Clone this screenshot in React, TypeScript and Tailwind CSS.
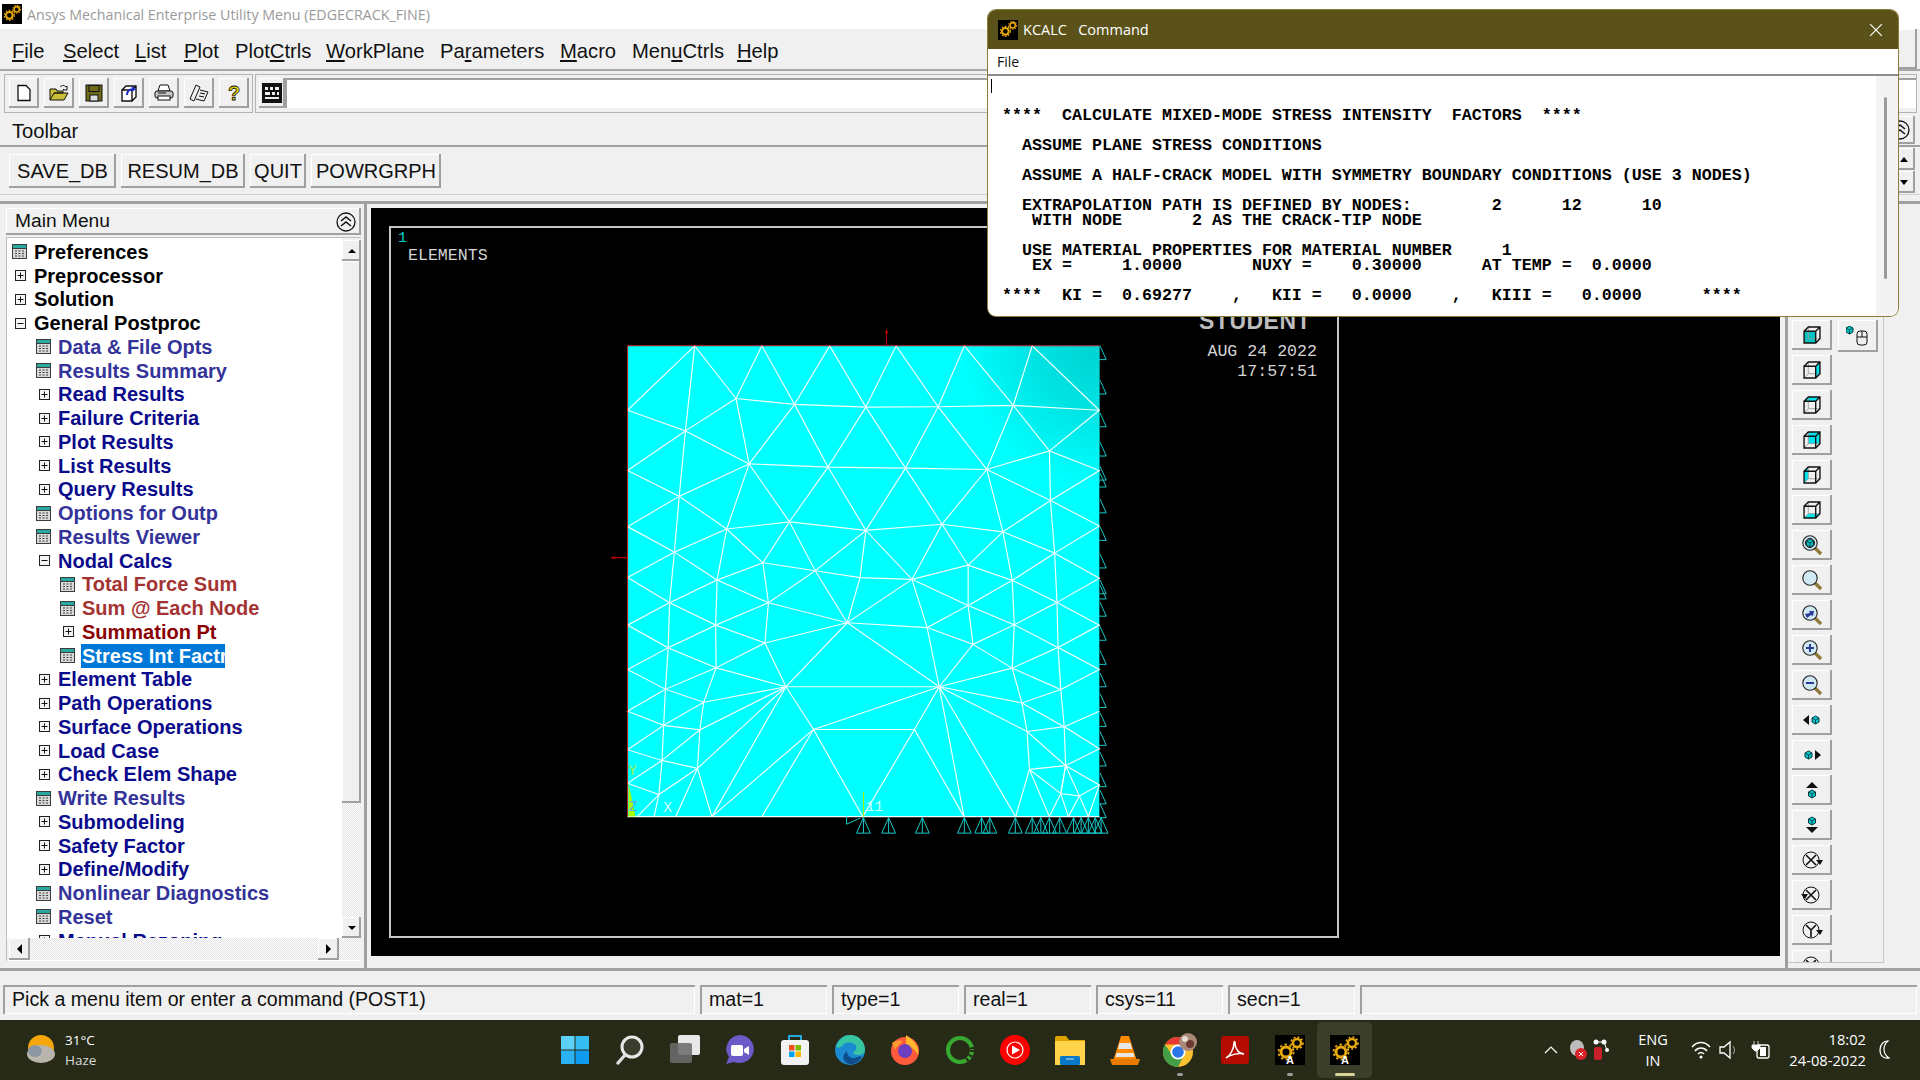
import React, {FC, ReactNode} from 'react';

const raised = 'shadow-[inset_-2px_-2px_0_#a0a0a0,inset_1px_1px_0_#ffffff]';
const sunken = 'shadow-[inset_2px_2px_0_#a0a0a0,inset_-1px_-1px_0_#ffffff]';
const dither = 'bg-[repeating-conic-gradient(#e2e2e2_0_25%,#ffffff_0_50%)] bg-[length:2px_2px]';

const menus = [
  {pre: '', ul: 'F', post: 'ile', w: 'w-[51px]'},
  {pre: '', ul: 'S', post: 'elect', w: 'w-[72px]'},
  {pre: '', ul: 'L', post: 'ist', w: 'w-[49px]'},
  {pre: '', ul: 'P', post: 'lot', w: 'w-[51px]'},
  {pre: 'Plot', ul: 'C', post: 'trls', w: 'w-[91px]'},
  {pre: '', ul: 'W', post: 'orkPlane', w: 'w-[114px]'},
  {pre: 'Pa', ul: 'r', post: 'ameters', w: 'w-[120px]'},
  {pre: '', ul: 'M', post: 'acro', w: 'w-[72px]'},
  {pre: 'Men', ul: 'u', post: 'Ctrls', w: 'w-[105px]'},
  {pre: '', ul: 'H', post: 'elp', w: 'w-[50px]'},
];

type Row = {label: string; level: 0 | 1 | 2; kind: 'calc' | 'plus' | 'minus'; tone: string; selected?: boolean};
const navy = 'text-[#0a0a8c]';
const blue = 'text-[#333399]';
const rows: Row[] = [
  {label: 'Preferences', level: 0, kind: 'calc', tone: 'text-black'},
  {label: 'Preprocessor', level: 0, kind: 'plus', tone: 'text-black'},
  {label: 'Solution', level: 0, kind: 'plus', tone: 'text-black'},
  {label: 'General Postproc', level: 0, kind: 'minus', tone: 'text-black'},
  {label: 'Data & File Opts', level: 1, kind: 'calc', tone: blue},
  {label: 'Results Summary', level: 1, kind: 'calc', tone: blue},
  {label: 'Read Results', level: 1, kind: 'plus', tone: navy},
  {label: 'Failure Criteria', level: 1, kind: 'plus', tone: navy},
  {label: 'Plot Results', level: 1, kind: 'plus', tone: navy},
  {label: 'List Results', level: 1, kind: 'plus', tone: navy},
  {label: 'Query Results', level: 1, kind: 'plus', tone: navy},
  {label: 'Options for Outp', level: 1, kind: 'calc', tone: blue},
  {label: 'Results Viewer', level: 1, kind: 'calc', tone: blue},
  {label: 'Nodal Calcs', level: 1, kind: 'minus', tone: navy},
  {label: 'Total Force Sum', level: 2, kind: 'calc', tone: 'text-[#a33333]'},
  {label: 'Sum @ Each Node', level: 2, kind: 'calc', tone: 'text-[#a33333]'},
  {label: 'Summation Pt', level: 2, kind: 'plus', tone: 'text-[#8b0000]'},
  {label: 'Stress Int Factr', level: 2, kind: 'calc', tone: 'text-white', selected: true},
  {label: 'Element Table', level: 1, kind: 'plus', tone: navy},
  {label: 'Path Operations', level: 1, kind: 'plus', tone: navy},
  {label: 'Surface Operations', level: 1, kind: 'plus', tone: navy},
  {label: 'Load Case', level: 1, kind: 'plus', tone: navy},
  {label: 'Check Elem Shape', level: 1, kind: 'plus', tone: navy},
  {label: 'Write Results', level: 1, kind: 'calc', tone: blue},
  {label: 'Submodeling', level: 1, kind: 'plus', tone: navy},
  {label: 'Safety Factor', level: 1, kind: 'plus', tone: navy},
  {label: 'Define/Modify', level: 1, kind: 'plus', tone: navy},
  {label: 'Nonlinear Diagnostics', level: 1, kind: 'calc', tone: blue},
  {label: 'Reset', level: 1, kind: 'calc', tone: blue},
  {label: 'Manual Rezoning', level: 1, kind: 'plus', tone: navy},
];
const levelPad = ['pl-[5px]', 'pl-[29px]', 'pl-[53px]'];

const meshLines = [
  '80,262 275,75 395,228 470,75 565,245 667,75 772,253 860,75 982,252 1058,75 1200,248 1255,75 1450,262',
  '395,228 565,245 772,253 982,252 1200,248 1450,262',
  '275,75 248,322 230,512 216,674 202,821 198,952 190,1072 185,1177 180,1279 171,1378 157,1442',
  '80,262 248,322 395,228 433,418 248,322 80,437 230,512 433,418',
  '433,418 565,245 662,427 772,253 887,430 982,252 1123,434 1200,248 1305,380 1450,262',
  '433,418 662,427 887,430 1123,434 1305,380 1450,437 1308,524 1450,598',
  '80,600 230,512 368,607 433,418 550,586 662,427 772,611 887,430 993,593 1123,434 1170,615 1308,524 1123,434',
  '1305,380 1308,524 1320,677 1327,820 1330,951 1338,1073 1348,1181 1352,1294 1338,1375 1305,1442',
  '368,607 550,586 772,611 993,593 1170,615 1320,677 1450,598',
  '80,600 216,674 368,607 340,755 336,886 337,1010 301,1110 290,1190 283,1302 325,1442',
  '80,748 216,674 340,755 473,705 368,607',
  '473,705 550,586 625,728 772,611 906,753 993,593 1069,712 1170,615 1197,756 1203,885 1197,1011 1225,1112 1240,1195 1247,1305 1207,1442',
  '473,705 625,728 755,748 906,753 1069,712 1197,756 1320,677 1450,750 1327,820 1197,756',
  '772,611 755,748 718,879 625,728 489,821 473,705',
  '80,748 202,821 340,755 489,821 718,879 906,753 950,893 985,1065',
  '80,886 202,821 336,886 489,821 479,938 336,886 198,952 80,886',
  '718,879 950,893 1069,829 1069,712',
  '1069,829 1083,942 950,893',
  '1069,829 1203,885 1327,820 1450,886 1330,951 1203,885 1083,942 1197,1011 1330,951 1450,1015 1338,1073 1197,1011',
  '906,753 1069,829 1197,756',
  '479,938 718,879 540,1065 479,938 337,1010 540,1065',
  '718,879 985,1065 1083,942',
  '540,1065 985,1065 1197,1011',
  '80,1015 198,952 337,1010 190,1072 80,1015',
  '190,1072 301,1110 540,1065 290,1190 185,1177 80,1136 190,1072',
  '185,1177 301,1110',
  '80,1248 185,1177',
  '80,1248 180,1279 290,1190',
  '80,1345 180,1279 283,1302 540,1065 325,1442 620,1189 540,1065',
  '620,1189 913,1189 985,1065 620,1189',
  '470,1442 620,1189 763,1442 913,1189 1057,1442 985,1065 1207,1442',
  '985,1065 1240,1195',
  '985,1065 1225,1112 1338,1073',
  '1225,1112 1348,1181 1450,1136',
  '1240,1195 1348,1181 1450,1245 1352,1294 1240,1195',
  '1247,1305 1352,1294 1450,1350 1392,1382 1352,1294 1338,1375 1392,1382 1360,1442',
  '1247,1305 1338,1375 1360,1442',
  '1247,1305 1305,1442',
  '1392,1382 1418,1442 1450,1350',
  '80,1345 171,1378 283,1302 220,1442',
  '171,1378 108,1442',
  '80,1442 1450,1442',
];
const rightBc = [75, 175, 270, 355, 425, 445, 520, 600, 680, 755, 770, 820, 890, 960, 1025, 1085, 1140, 1195, 1255, 1315, 1365, 1405];
const bottomBc = [765, 838, 936, 1058, 1108, 1132, 1206, 1255, 1280, 1305, 1335, 1375, 1397, 1418, 1438, 1455];

const dialogText = [
  '',
  '',
  '****  CALCULATE MIXED-MODE STRESS INTENSITY  FACTORS  ****',
  '',
  '  ASSUME PLANE STRESS CONDITIONS',
  '',
  '  ASSUME A HALF-CRACK MODEL WITH SYMMETRY BOUNDARY CONDITIONS (USE 3 NODES)',
  '',
  '  EXTRAPOLATION PATH IS DEFINED BY NODES:        2      12      10',
  '   WITH NODE       2 AS THE CRACK-TIP NODE',
  '',
  '  USE MATERIAL PROPERTIES FOR MATERIAL NUMBER     1',
  '   EX =     1.0000       NUXY =    0.30000      AT TEMP =  0.0000',
  '',
  '****  KI =  0.69277    ,   KII =   0.0000    ,   KIII =   0.0000      ****',
].join('\n');

const Gears: FC<{letter?: boolean; className?: string}> = ({letter, className}) => (
  <svg viewBox="0 0 30 30" className={className}>
    <rect width="30" height="30" fill="#000"/>
    <circle cx="22" cy="8" r="4" fill="none" stroke="#e8a90c" strokeWidth="2.4"/>
    <circle cx="22" cy="8" r="6" fill="none" stroke="#e8a90c" strokeWidth="1.6" strokeDasharray="2 2"/>
    <circle cx="11" cy="17" r="5" fill="none" stroke="#e8a90c" strokeWidth="3"/>
    <circle cx="11" cy="17" r="7.5" fill="none" stroke="#e8a90c" strokeWidth="1.8" strokeDasharray="2.4 2.4"/>
    {letter && <text x="15" y="29" textAnchor="middle" fontSize="11" fontWeight="700" fontFamily="Liberation Sans" fill="#fff">A</text>}
  </svg>
);

const CalcIcon: FC = () => (
  <svg viewBox="0 0 15 15" className="w-[15px] h-[15px]">
    <rect width="15" height="15" fill="#3c3c3c"/>
    <rect x="1" y="1" width="13" height="3" fill="#2aa7a0"/>
    <rect x="1" y="5" width="13" height="9" fill="#d8d8d8"/>
    <path d="M3 7h2M6.5 7h2M10 7h2M3 9.5h2M6.5 9.5h2M10 9.5h2M3 12h2M6.5 12h2M10 12h2" stroke="#444" strokeWidth="1"/>
  </svg>
);

const BoxIcon: FC<{open?: boolean}> = ({open}) => (
  <svg viewBox="0 0 11 11" className="w-[11px] h-[11px] ml-[1px]">
    <rect x="0.5" y="0.5" width="10" height="10" fill="#f4f4f4" stroke="#222"/>
    <path d={open ? 'M2.5 5.5h6' : 'M2.5 5.5h6M5.5 2.5v6'} stroke="#111"/>
  </svg>
);

const TreeRow: FC<{row: Row}> = ({row}) => (
  <div className={`h-[23.75px] flex items-center whitespace-nowrap ${levelPad[row.level]}`}>
    <span className="w-[15px] flex justify-center shrink-0">
      {row.kind === 'calc' ? <CalcIcon/> : <BoxIcon open={row.kind === 'minus'}/>}
    </span>
    <span className={`ml-[6px] pl-[1px] h-[24px] leading-[24px] text-[20px] font-bold ${row.tone} ${row.selected ? 'bg-[#0078d7] w-[144px] overflow-hidden' : ''}`}>
      {row.label}
    </span>
  </div>
);

const ToolButton: FC<{children: ReactNode; className?: string}> = ({children, className}) => (
  <div className={`w-[30px] h-[30px] flex items-center justify-center bg-[#f0f0f0] ${raised} ${className ?? ''}`}>
    {children}
  </div>
);

const topIcons: ReactNode[] = [
  <svg key="new" viewBox="0 0 20 20" className="w-[20px] h-[20px]"><path d="M4 2.5h8l4 4v11H4z" fill="#fff" stroke="#111" strokeWidth="1.3"/></svg>,
  <svg key="open" viewBox="0 0 20 20" className="w-[20px] h-[20px]"><path d="M1 17V6h6l1 2h6v2H5L1 17h14l4-7H5" fill="#c9bd3a" stroke="#111"/><path d="M11 4c2-2 4-2 6 0l1-1v4h-4l1-1" fill="none" stroke="#111"/></svg>,
  <svg key="save" viewBox="0 0 20 20" className="w-[20px] h-[20px]"><rect x="2" y="2" width="16" height="16" fill="#6e6a1a" stroke="#111"/><rect x="5" y="2.5" width="10" height="6" fill="#6e6a1a" stroke="#111"/><rect x="6" y="12" width="8" height="6" fill="#ddd" stroke="#111"/></svg>,
  <svg key="resume" viewBox="0 0 20 20" className="w-[20px] h-[20px]"><path d="M3 7h10v11H3zM3 7l4-4h10v11l-4 4M13 7l4-4" fill="#fff" stroke="#111" strokeWidth="1.4"/><path d="M8 12c0-5 4-6 7-6l-2-2M15 6l-2 2" fill="none" stroke="#1d2fc4" strokeWidth="2"/></svg>,
  <svg key="print" viewBox="0 0 20 20" className="w-[20px] h-[20px]"><path d="M6 2h8l2 6H4z" fill="#fff" stroke="#111"/><rect x="1" y="8" width="18" height="7" rx="2" fill="#c8c8c8" stroke="#111"/><rect x="4" y="13" width="12" height="4" fill="#fff" stroke="#111"/><path d="M4 10h8" stroke="#111"/></svg>,
  <svg key="note" viewBox="0 0 20 20" className="w-[20px] h-[20px]"><path d="M7 2l4 2-6 14-4-2zM11 7l8 2-4 9-8-2" fill="#eee" stroke="#111"/><path d="M11 10l5 1M10 13l5 1" stroke="#111"/></svg>,
  <svg key="help" viewBox="0 0 20 20" className="w-[20px] h-[20px]"><text x="10" y="17" textAnchor="middle" fontSize="20" fontWeight="700" fontFamily="Liberation Sans" fill="#e8d800" stroke="#111" strokeWidth="0.8">?</text></svg>,
];

// cube with one shaded face; face names follow the picture's button order
const facePaths: Record<string, string> = {
  front: 'M1 5h11v11H1z',
  right: 'M12 5l4-4v11l-4 4z',
  top: 'M1 5l4-4h11l-4 4z',
  back: 'M5 1h11v11H5z',
  left: 'M1 5l4-4v11l-4 4z',
  bottom: 'M1 16l4-4h11l-4 4z',
};
const Cube: FC<{face: string}> = ({face}) => (
  <svg viewBox="0 0 17 17" className="w-[18px] h-[18px]">
    <path d={facePaths[face]} fill={face === 'front' ? '#00c4c4' : '#00e5ee'}/>
    <path d="M5 1v11H16M5 12l-4 4" fill="none" stroke="#999" strokeWidth="0.8"/>
    <path d="M1 5h11v11H1zM1 5l4-4h11v11l-4 4M12 5l4-4" fill="none" stroke="#111" strokeWidth="1.3"/>
  </svg>
);

const MiniCube: FC<{x: number; y: number}> = ({x, y}) => (
  <g transform={`translate(${x} ${y})`}>
    <path d="M3.5 0l3.500 2v4l-3.500 2L0 6V2z" fill="#00c8d0" stroke="#0b3a3a" strokeWidth="1"/>
    <path d="M3.5 4v4M0 2l3.500 2L7 2" stroke="#0b3a3a" strokeWidth="0.9" fill="none"/>
  </g>
);

const Magnifier: FC<{variant: 'cube' | 'plain' | 'back' | 'plus' | 'minus'}> = ({variant}) => (
  <svg viewBox="0 0 22 22" className="w-[22px] h-[22px]">
    <path d="M13 13l7 7" stroke="#8f7a3c" strokeWidth="3.4"/>
    <circle cx="9" cy="9" r="7.2" fill="#cfe8f2" stroke="#222" strokeWidth="1.1"/>
    {variant === 'cube' && <><circle cx="9" cy="9" r="4.6" fill="#a8d8e4" stroke="#222"/><MiniCube x={5.5} y={5}/></>}
    {variant === 'plus' && <path d="M5 9h8M9 5v8" stroke="#2c3a9a" strokeWidth="2"/>}
    {variant === 'minus' && <path d="M5 9h8" stroke="#2c3a9a" strokeWidth="2"/>}
    {variant === 'back' && <path d="M4 10l5-1-1-2 5 0-1 5-2-1-4 3z" fill="#2c3a9a"/>}
  </svg>
);

const Pan: FC<{dir: 'l' | 'r' | 'u' | 'd'}> = ({dir}) => (
  <svg viewBox="0 0 22 22" className="w-[22px] h-[22px]">
    {dir === 'l' && <><path d="M8 6v10l-6-5z" fill="#111"/><MiniCube x={11} y={7}/></>}
    {dir === 'r' && <><MiniCube x={4} y={7}/><path d="M14 6v10l6-5z" fill="#111"/></>}
    {dir === 'u' && <><path d="M5 9h12l-6-6z" fill="#111"/><MiniCube x={7.5} y={11}/></>}
    {dir === 'd' && <><MiniCube x={7.5} y={3}/><path d="M5 13h12l-6 6z" fill="#111"/></>}
  </svg>
);

const Rotate: FC<{glyph: 'x' | 'xr' | 'y'}> = ({glyph}) => (
  <svg viewBox="0 0 22 22" className="w-[22px] h-[22px]">
    <circle cx="10" cy="11" r="8" fill="none" stroke="#111" strokeWidth="1"/>
    {glyph === 'y' ? <path d="M10 18v-7L5 6M10 11l5-5" stroke="#111" strokeWidth="1.6" fill="none"/> : <path d="M5 6l10 10M15 6L5 16" stroke="#111" strokeWidth="1.6"/>}
    {glyph === 'xr' ? <path d="M0 10h7l-3 5z" fill="#111"/> : <path d="M15 11h7l-3 5z" fill="#111"/>}
  </svg>
);

const sideIcons: ReactNode[] = [
  <Cube key="c1" face="front"/>, <Cube key="c2" face="right"/>, <Cube key="c3" face="top"/>,
  <Cube key="c4" face="back"/>, <Cube key="c5" face="left"/>, <Cube key="c6" face="bottom"/>,
  <Magnifier key="m1" variant="cube"/>, <Magnifier key="m2" variant="plain"/>, <Magnifier key="m3" variant="back"/>,
  <Magnifier key="m4" variant="plus"/>, <Magnifier key="m5" variant="minus"/>,
  <Pan key="p1" dir="l"/>, <Pan key="p2" dir="r"/>, <Pan key="p3" dir="u"/>, <Pan key="p4" dir="d"/>,
  <Rotate key="r1" glyph="x"/>, <Rotate key="r2" glyph="xr"/>, <Rotate key="r3" glyph="y"/>, <Rotate key="r4" glyph="y"/>,
];

const Mesh: FC = () => (
  <svg viewBox="0 0 1568 1568" className="w-[540px] h-[540px]">
    <defs>
      <radialGradient id="corner" gradientUnits="userSpaceOnUse" cx="1450" cy="75" r="400">
        <stop offset="0" stopColor="#00d2d2"/>
        <stop offset="0.5" stopColor="#00e4e4"/>
        <stop offset="1" stopColor="#00ffff"/>
      </radialGradient>
    </defs>
    <rect x="80" y="75" width="1370" height="1367" fill="#00ffff"/>
    <rect x="1050" y="75" width="400" height="400" fill="url(#corner)"/>
    <g fill="none" stroke="#f4ffff" strokeWidth="3.4">
      {meshLines.map(points => <polyline key={points} points={points}/>)}
    </g>
    <path d="M80 1442V75h1370" fill="none" stroke="#c02020" strokeWidth="3"/>
    <path d="M832 75V32M80 690H36" stroke="#c00000" strokeWidth="3"/>
    <path d="M827 38l5-12 5 12zM42 685l-12 5 12 5z" fill="#c00000"/>
    <g fill="none" stroke="#14d0d0" strokeWidth="2.8">
      {rightBc.map(y => <path key={y} d={`M1452 ${y}l18 40h-20`}/>)}
      {bottomBc.map(x => <path key={x} d={`M${x} 1445l-20 45h40zM${x} 1445v45`}/>)}
      <path d="M716 1442v22l40-18"/>
    </g>
    <path d="M83 1345l20 97H83z" fill="#a8ff00"/>
    <path d="M765 1370v72" stroke="#a8f000" strokeWidth="3"/>
    <g fontFamily="Liberation Mono" fontSize="42">
      <text x="82" y="1322" fill="#9cf04a">Y</text>
      <text x="84" y="1425" fill="#5aa8e0">Z</text>
      <text x="184" y="1428" fill="#d8ffff">X</text>
      <text x="772" y="1426" fill="#d8ffff">11</text>
    </g>
  </svg>
);

const Weather: FC = () => (
  <svg viewBox="0 0 30 32" className="w-[30px] h-[32px]">
    <circle cx="15" cy="14" r="13" fill="#f5a70a"/>
    <ellipse cx="15" cy="20" rx="14" ry="9" fill="#b9b4ac"/>
    <ellipse cx="9" cy="17" rx="7" ry="6" fill="#8d97a3"/>
  </svg>
);

const taskIcons: ReactNode[] = [
  <svg key="win" viewBox="0 0 30 30" className="w-[30px] h-[30px]">
    <path d="M1 1h13.5v13.5H1z" fill="#5cd0f5"/><path d="M15.5 1H29v13.5H15.5z" fill="#36bdf2"/>
    <path d="M1 15.5h13.5V29H1z" fill="#2cb2f2"/><path d="M15.5 15.5H29V29H15.5z" fill="#0f9bf0"/>
  </svg>,
  <svg key="search" viewBox="0 0 30 30" className="w-[30px] h-[30px]">
    <circle cx="17" cy="12" r="10" fill="#3a3d2e" stroke="#e8e8e8" strokeWidth="3"/>
    <path d="M10 20l-7 8" stroke="#e0e0e0" strokeWidth="3.4" strokeLinecap="round"/>
  </svg>,
  <svg key="task" viewBox="0 0 30 30" className="w-[30px] h-[30px]">
    <rect x="8" y="0" width="22" height="20" rx="2" fill="#e8e8e8"/>
    <rect x="0" y="8" width="22" height="20" rx="2" fill="#6c6c6c" fillOpacity="0.88"/>
  </svg>,
  <svg key="chat" viewBox="0 0 30 30" className="w-[30px] h-[30px]">
    <path d="M15 0a14.500 14 0 1 1-6 27l-8 2 3-7A14.500 14 0 0 1 15 0z" fill="#6a5bc8"/>
    <rect x="6" y="10" width="12" height="11" rx="2" fill="#fff"/><path d="M19 14l5-3v9l-5-3z" fill="#fff"/>
  </svg>,
  <svg key="store" viewBox="0 0 30 30" className="w-[30px] h-[30px]">
    <path d="M9 6V1h12v5" fill="none" stroke="#27a9e0" strokeWidth="2"/>
    <rect x="1" y="5" width="28" height="25" rx="3" fill="#f2f2f2"/>
    <path d="M9 10h5.500v5.500H9z" fill="#f25022"/><path d="M15.500 10H21v5.500h-5.500z" fill="#7fba00"/>
    <path d="M9 16.500h5.500V22H9z" fill="#00a4ef"/><path d="M15.500 16.500H21V22h-5.500z" fill="#ffb900"/>
  </svg>,
  <svg key="edge" viewBox="0 0 30 30" className="w-[30px] h-[30px]">
    <circle cx="15" cy="15" r="15" fill="#1b8ad0"/>
    <path d="M1 12C4 3 10 0 15 0c8 0 15 6 15 15 0 3-3 5-7 5-3 0-5-1-5-3 3-1 4-3 3-6-2-4-10-5-14 0-2 2-4 2-6 1z" fill="#36c5a0"/>
    <path d="M12 16c0 5 4 8 8 7 2-1 5-2 7-1-3 5-8 8-13 7-6-2-8-8-2-13z" fill="#0f4e8a"/>
  </svg>,
  <svg key="ff" viewBox="0 0 30 30" className="w-[30px] h-[30px]">
    <circle cx="15" cy="16" r="14" fill="#ff5a3c"/>
    <path d="M16 0c8 5 14 12 12 20-2-4-6-8-12-10z" fill="#ffb72b"/>
    <path d="M2 8c3-3 8-3 11-2-3 3-6 5-8 9z" fill="#ff9a2e"/>
    <circle cx="15" cy="16" r="7" fill="#6b3fc0"/>
  </svg>,
  <svg key="ring" viewBox="0 0 30 30" className="w-[30px] h-[30px]">
    <circle cx="15" cy="15" r="12" fill="none" stroke="#36a92e" strokeWidth="4"/>
    <circle cx="15" cy="15" r="12" fill="none" stroke="#272a17" strokeWidth="4.200" strokeDasharray="2 3 2 3 2 60"/>
  </svg>,
  <svg key="yt" viewBox="0 0 30 30" className="w-[30px] h-[30px]">
    <circle cx="15" cy="15" r="15" fill="#ff0000"/><circle cx="15" cy="15" r="8" fill="#ff0000" stroke="#fff" strokeWidth="1.200"/>
    <path d="M12 10.500l8 4.500-8 4.500z" fill="#fff"/>
  </svg>,
  <svg key="folder" viewBox="0 0 30 30" className="w-[30px] h-[30px]">
    <path d="M0 3a2 2 0 0 1 2-2h9l3 4h16v4H0z" fill="#e0a400"/>
    <path d="M0 6h30v24H0z" fill="#ffd24c"/>
    <rect x="5" y="21" width="20" height="9" rx="1.500" fill="#0a78c8"/><path d="M11 24h8" stroke="#cde" strokeWidth="1"/>
  </svg>,
  <svg key="vlc" viewBox="0 0 30 30" className="w-[30px] h-[30px]">
    <path d="M11 1h8l8 25H3z" fill="#ff8a00"/><path d="M9.500 8h11l1.500 6H8zM6.500 18h17l1 4H5.500z" fill="#e6e6e6"/>
    <path d="M0 24h30l-2 6H2z" fill="#e87a00"/>
  </svg>,
  <svg key="chrome" viewBox="0 0 34 34" className="w-[34px] h-[34px]">
    <circle cx="15" cy="19" r="15" fill="#fbc02d"/>
    <path d="M2 11.500A15 15 0 0 1 28 11.500H15z" fill="#e53935"/>
    <path d="M2 11.500A15 15 0 0 0 15 34l6-12H9z" fill="#43a047"/>
    <circle cx="15" cy="19" r="7.500" fill="#fff"/><circle cx="15" cy="19" r="5.800" fill="#2a75e8"/>
    <circle cx="25" cy="9" r="9" fill="#a98878"/><circle cx="27" cy="11" r="4" fill="#6a3a30"/><circle cx="22" cy="6" r="3" fill="#e6dcd4"/>
  </svg>,
  <svg key="pdf" viewBox="0 0 28 28" className="w-[28px] h-[28px]">
    <rect width="28" height="28" rx="3" fill="#b30b00"/>
    <path d="M5 22c4-2 8-9 8-15 0-2 1-2 1 0 0 6 4 11 9 11-5-1-13 0-18 4z" fill="none" stroke="#fff" strokeWidth="1.500"/>
  </svg>,
  <Gears key="a1" letter className="w-[30px] h-[30px]"/>,
  <Gears key="a2" letter className="w-[30px] h-[30px]"/>,
];

const dots = [false, false, false, false, false, false, false, false, false, false, false, true, false, true, true];

const StatusField: FC<{children?: ReactNode; className: string}> = ({children, className}) => (
  <div className={`h-[29px] pl-[9px] flex items-center text-[19.6px] text-[#111] ${sunken} ${className}`}>{children}</div>
);

const App: FC = () => (
  <div className="relative w-[1920px] h-[1080px] overflow-hidden bg-[#f0f0f0] flex flex-col font-[family-name:Liberation_Sans,sans-serif]">
    {/* window title */}
    <div className="h-[29px] bg-white flex items-center pl-[2px] shrink-0">
      <Gears className="w-[20px] h-[20px] mb-[1px]"/>
      <span className="ml-[5px] text-[14.25px] text-[#9a9a9a] font-[family-name:Open_Sans,sans-serif]">
        Ansys Mechanical Enterprise Utility Menu (EDGECRACK_FINE)
      </span>
    </div>

    {/* menu bar */}
    <div className="h-[42px] shrink-0 flex items-center pl-[12px] pr-[3px] border-b-2 border-[#a8a8a8]">
      <div className="flex pt-[5px]">
        {menus.map(m => (
          <span key={m.ul + m.post} className={`text-[20.2px] text-[#111] whitespace-nowrap ${m.w}`}>
            {m.pre}<span className="underline">{m.ul}</span>{m.post}
          </span>
        ))}
      </div>
      <div className={`ml-auto w-[40px] h-[40px] ${raised}`}/>
    </div>

    {/* command line row */}
    <div className="h-[44px] shrink-0 flex items-center pl-[4px] pr-[3px] gap-[2px]">
      <div className="h-[39px] w-[249px] flex items-center gap-[5px] pl-[4px] border border-[#b4b4b4]">
        {topIcons.map((icon, i) => <ToolButton key={i}>{icon}</ToolButton>)}
      </div>
      <div className="h-[39px] grow flex items-center pl-[3px] border border-[#b4b4b4]">
        <div className={`w-[26px] h-[30px] flex items-center justify-center ${raised}`}>
          <svg viewBox="0 0 20 20" className="w-[20px] h-[20px]">
            <rect width="20" height="20" fill="#111"/>
            <path d="M3 4h3v3H3zM8 4h3v3H8zM13 4h4v3h-4zM3 9h5v3H3zM10 9h3v3h-3zM15 9h2v3h-2zM3 14h14v2H3z" fill="#eee"/>
          </svg>
        </div>
        <div className={`grow h-[30px] bg-white ${sunken}`}/>
      </div>
    </div>

    {/* toolbar label */}
    <div className="h-[32px] shrink-0 flex items-center pl-[12px] pr-[5px] text-[20.2px] text-[#111] border-b-2 border-[#a0a0a0]">
      <span className="pt-[2px]">Toolbar</span>
      <div className={`ml-auto w-[30px] h-[28px] flex items-center justify-center ${raised}`}>
        <svg viewBox="0 0 20 20" className="w-[20px] h-[20px]">
          <circle cx="10" cy="10" r="9" fill="none" stroke="#111" strokeWidth="1.3"/>
          <path d="M5 9l5-4 5 4M5 14l5-4 5 4" fill="none" stroke="#111" strokeWidth="1.6"/>
        </svg>
      </div>
    </div>

    {/* toolbar buttons */}
    <div className="h-[48px] shrink-0 flex items-center pl-[9px] pr-[5px] gap-[5px] border-b border-[#cfcfcf]">
      {[
        ['SAVE_DB', 'w-[107px]'],
        ['RESUM_DB', 'w-[124px]'],
        ['QUIT', 'w-[56px]'],
        ['POWRGRPH', 'w-[130px]'],
      ].map(([label, w]) => (
        <div key={label} className={`h-[34px] flex items-center justify-center text-[20px] text-[#111] ${raised} ${w}`}>{label}</div>
      ))}
      <div className="ml-auto flex flex-col gap-[1px]">
        <div className={`w-[22px] h-[22px] flex items-center justify-center ${raised}`}><span className="border-x-[4px] border-x-transparent border-b-[5px] border-b-black"/></div>
        <div className={`w-[22px] h-[22px] flex items-center justify-center ${raised}`}><span className="border-x-[4px] border-x-transparent border-t-[5px] border-t-black"/></div>
      </div>
    </div>

    {/* main area */}
    <div className="h-[770px] shrink-0 mt-[6px] flex border-t-[3px] border-b-[3px] border-[#a0a0a0]">
      {/* main menu panel */}
      <div className="w-[371px] shrink-0 flex">
        <div className="w-[361px] pl-[6px] pt-[4px] flex flex-col">
          <div className={`h-[27px] flex items-center pl-[9px] pr-[5px] text-[19.2px] text-[#111] ${raised}`}>
            <span>Main Menu</span>
            <svg viewBox="0 0 20 20" className="ml-auto w-[20px] h-[20px]">
              <circle cx="10" cy="10" r="9" fill="none" stroke="#111" strokeWidth="1.3"/>
              <path d="M5 9l5-4 5 4M5 14l5-4 5 4" fill="none" stroke="#111" strokeWidth="1.6"/>
            </svg>
          </div>
          <div className="mt-[2px] h-[724px] bg-white flex flex-col border-t border-l border-[#bdbdbd]">
            <div className="flex h-[700px]">
              <div className="grow pt-[2px] overflow-hidden">
                {rows.map(r => <TreeRow key={r.label} row={r}/>)}
              </div>
              <div className={`w-[19px] shrink-0 flex flex-col ${dither}`}>
                <div className={`h-[21px] shrink-0 mt-[2px] bg-[#f0f0f0] flex items-center justify-center ${raised}`}><span className="border-x-[4px] border-x-transparent border-b-[4px] border-b-black"/></div>
                <div className={`h-[542px] shrink-0 bg-[#f0f0f0] ${raised}`}/>
                <div className={`h-[21px] shrink-0 mt-auto bg-[#f0f0f0] flex items-center justify-center ${raised}`}><span className="border-x-[4px] border-x-transparent border-t-[4px] border-t-black"/></div>
              </div>
            </div>
            <div className={`h-[22px] flex justify-between pr-[22px] ${dither}`}>
              <div className={`w-[21px] ml-[2px] bg-[#f0f0f0] flex items-center justify-center ${raised}`}><span className="border-y-[5px] border-y-transparent border-r-[5px] border-r-black"/></div>
              <div className={`w-[21px] bg-[#f0f0f0] flex items-center justify-center ${raised}`}><span className="border-y-[5px] border-y-transparent border-l-[5px] border-l-black"/></div>
            </div>
          </div>
        </div>
        <div className="w-[3px] ml-[3px] bg-[#a0a0a0]"/>
      </div>

      {/* graphics window */}
      <div className="w-[1409px] shrink-0 h-[748px] mt-[4px] bg-black pl-[18px] pt-[18px]">
        <div className="relative w-[950px] h-[712px] border-2 border-[#c8c8c8]">
          <span className="absolute left-[7px] top-[0px] text-[15px] text-[#00d0c8] font-[family-name:Liberation_Mono,monospace]">1</span>
          <span className="absolute left-[17px] top-[18px] text-[16.6px] leading-[20px] font-[family-name:Liberation_Mono,monospace] text-[#d4d4d4]">ELEMENTS</span>
          <div className="absolute left-[209px] top-[92px]"><Mesh/></div>
          <span className="absolute left-[808px] top-[76px] text-[23px] font-bold text-[#bdbdbd] tracking-[0.5px]">STUDENT</span>
          <div className="absolute right-[20px] top-[114px] text-right text-[16.6px] leading-[20px] whitespace-pre text-[#d4d4d4] font-[family-name:Liberation_Mono,monospace]">
            {'AUG 24 2022\n17:57:51'}
          </div>
        </div>
      </div>

      {/* view toolbar */}
      <div className="flex-1 flex pl-[5px]">
        <div className="w-[3px] bg-[#a0a0a0]"/>
        <div className="w-[96px] h-[759px] border-r border-b border-[#c4c4c4] flex gap-[6px] pl-[4px] pt-[116px] overflow-hidden">
          <div className="flex flex-col gap-[5px] shrink-0">
            {sideIcons.map((icon, i) => (
              <div key={i} className={`w-[40px] h-[30px] shrink-0 flex items-center justify-center ${raised}`}>{icon}</div>
            ))}
          </div>
          <div className={`w-[40px] h-[32px] shrink-0 flex items-center justify-center ${raised}`}>
            <svg viewBox="0 0 24 20" className="w-[24px] h-[20px]">
              <MiniCube x={0} y={0}/>
              <rect x="11" y="5" width="10" height="14" rx="3" fill="#eee" stroke="#111"/>
              <path d="M11 11h10M16 5v6" stroke="#111"/>
            </svg>
          </div>
        </div>
      </div>
    </div>

    {/* status line */}
    <div className="grow flex items-start gap-[5px] pl-[3px] pr-[3px] pt-[14px]">
      <StatusField className="w-[692px]">Pick a menu item or enter a command (POST1)</StatusField>
      <StatusField className="w-[127px]">mat=1</StatusField>
      <StatusField className="w-[127px]">type=1</StatusField>
      <StatusField className="w-[127px]">real=1</StatusField>
      <StatusField className="w-[127px]">csys=11</StatusField>
      <StatusField className="w-[127px]">secn=1</StatusField>
      <StatusField className="grow"/>
    </div>

    {/* taskbar */}
    <div className="h-[60px] shrink-0 bg-[#272a17] flex items-center text-white font-[family-name:Open_Sans,sans-serif]">
      <div className="w-[547px] shrink-0 flex items-center pl-[26px]">
        <Weather/>
        <div className="ml-[9px] text-[13.5px] leading-[20px]">
          <div>31°C</div>
          <div className="text-[#d8d8d8]">Haze</div>
        </div>
      </div>
      <div className="flex items-center">
        {taskIcons.map((icon, i) => (
          <div key={i} className={`relative w-[55px] h-[56px] flex items-center justify-center ${i === 14 ? 'bg-[#3b3f2a] rounded-[5px]' : ''}`}>
            {icon}
            {dots[i] && <span className={`absolute bottom-[2px] h-[3px] rounded-full ${i === 14 ? 'w-[20px] bg-[#d9d39a]' : 'w-[6px] bg-[#9c9c9c]'}`}/>}
          </div>
        ))}
      </div>
      <div className="flex items-center grow pl-[172px]">
        <svg viewBox="0 0 14 8" className="w-[14px] h-[8px]"><path d="M1 7l6-6 6 6" fill="none" stroke="#fff" strokeWidth="1.2"/></svg>
        <svg viewBox="0 0 18 22" className="ml-[11px] w-[18px] h-[22px]"><ellipse cx="8" cy="9" rx="7" ry="8" fill="#bdbdbd"/><circle cx="12" cy="15" r="6" fill="#d8222a"/><path d="M10 13l4 4M14 13l-4 4" stroke="#fff"/></svg>
        <svg viewBox="0 0 18 22" className="ml-[5px] w-[18px] h-[22px]"><rect x="2" y="8" width="8" height="13" rx="2" fill="#c8202a"/><circle cx="4" cy="3" r="2.500" fill="#fff"/><circle cx="12" cy="3" r="2.500" fill="#fff"/><circle cx="15" cy="11" r="2" fill="#fff"/><path d="M4 3h8M12 3l3 8" stroke="#fff"/></svg>
        <div className="ml-[23px] w-[40px] text-center text-[14.5px] leading-[21px]"><div>ENG</div><div>IN</div></div>
        <svg viewBox="0 0 20 18" className="ml-[18px] w-[20px] h-[18px]"><path d="M1 6c5-6 13-6 18 0M4 10c3-4 9-4 12 0M7 13c2-2 4-2 6 0" fill="none" stroke="#fff" strokeWidth="1.500"/><circle cx="10" cy="16" r="1.500" fill="#fff"/></svg>
        <svg viewBox="0 0 20 20" className="ml-[7px] w-[20px] h-[20px]"><path d="M2 7h4l6-5v16l-6-5H2z" fill="none" stroke="#fff" strokeWidth="1.300"/><path d="M15 6c2 3 2 5 0 8" fill="none" stroke="#aaa"/></svg>
        <svg viewBox="0 0 20 20" className="ml-[13px] w-[20px] h-[20px]"><rect x="6" y="5" width="12" height="13" rx="2" fill="none" stroke="#fff" strokeWidth="1.300"/><rect x="9" y="7" width="6" height="9" fill="#fff"/><path d="M3 1v4M7 1v4M1 5h8v3l-3 3H4L1 8z" fill="#fff" stroke="#fff" strokeWidth="0.8"/></svg>
        <div className="ml-auto mr-[12px] text-right text-[14.7px] leading-[21px]"><div>18:02</div><div>24-08-2022</div></div>
        <svg viewBox="0 0 18 20" className="mr-[24px] w-[18px] h-[20px]"><path d="M8 1c5 4 6 12-1 17 5 1 9-2 9-8S12 1 8 1z" transform="matrix(-1 0 0 1 18 0)" fill="none" stroke="#fff" strokeWidth="1.200"/></svg>
      </div>
    </div>

    {/* KCALC dialog window sits over the desktop */}
    <div className="absolute left-[988px] top-[10px] w-[910px] h-[306px] rounded-[8px] overflow-hidden bg-white shadow-[0_0_0_1px_#8a7f3a] flex flex-col">
      <div className="h-[39px] shrink-0 bg-[#5b5219] flex items-center pl-[10px] pr-[15px] text-white text-[14.5px] font-[family-name:Open_Sans,sans-serif]">
        <Gears className="w-[20px] h-[20px]"/>
        <span className="ml-[5px] whitespace-pre">KCALC   Command</span>
        <svg viewBox="0 0 12 12" className="ml-auto w-[14px] h-[14px]"><path d="M1 1l10 10M11 1L1 11" stroke="#fff" strokeWidth="1"/></svg>
      </div>
      <div className="h-[25px] shrink-0 pl-[9px] flex items-center text-[14px] text-[#111] font-[family-name:Open_Sans,sans-serif]">File</div>
      <div className="h-[2px] shrink-0 bg-[#8c8c8c]"/>
      <div className="relative grow flex">
        <span className="absolute left-[3px] top-[3px] w-px h-[14px] bg-black"/>
        <pre className="grow pl-[14px] pt-[2px] text-[16.67px] leading-[15px] font-bold text-black font-[family-name:Liberation_Mono,monospace]">{dialogText}</pre>
        <div className="w-[22px] shrink-0 bg-[#f3f3f3] pt-[21px] pl-[8px]">
          <div className="w-[3px] h-[182px] bg-[#9a9a9a] rounded-full"/>
        </div>
      </div>
    </div>
  </div>
);

export default App;
